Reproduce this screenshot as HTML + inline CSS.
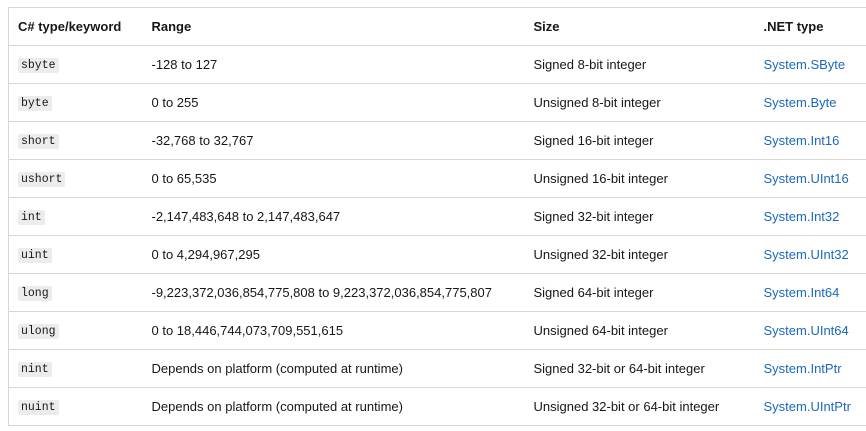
<!DOCTYPE html>
<html><head><style>
body{margin:0;background:#fff;font-family:"Liberation Sans",sans-serif;font-size:13px;color:#171717;}
table{position:absolute;left:8px;top:7px;width:858px;border-collapse:collapse;border-left:1px solid #d6d6d6;border-top:1px solid #d6d6d6;}
td,th{height:37px;padding:0 0 0 9px;border-bottom:1px solid #d6d6d6;text-align:left;white-space:nowrap;vertical-align:middle}
th{font-weight:bold;}
code{font-family:"Liberation Mono",monospace;font-size:11.5px;background:#ececec;padding:1px 3px;border-radius:2px;vertical-align:1px;}
a{color:#1c68bd;text-decoration:none}
</style></head><body>
<table>
<colgroup><col style="width:134px"><col style="width:382px"><col style="width:230px"><col></colgroup>
<tr><th>C# type/keyword</th><th>Range</th><th>Size</th><th>.NET type</th></tr>
<tr><td><code>sbyte</code></td><td>-128 to 127</td><td>Signed 8-bit integer</td><td><a>System.SByte</a></td></tr>
<tr><td><code>byte</code></td><td>0 to 255</td><td>Unsigned 8-bit integer</td><td><a>System.Byte</a></td></tr>
<tr><td><code>short</code></td><td>-32,768 to 32,767</td><td>Signed 16-bit integer</td><td><a>System.Int16</a></td></tr>
<tr><td><code>ushort</code></td><td>0 to 65,535</td><td>Unsigned 16-bit integer</td><td><a>System.UInt16</a></td></tr>
<tr><td><code>int</code></td><td>-2,147,483,648 to 2,147,483,647</td><td>Signed 32-bit integer</td><td><a>System.Int32</a></td></tr>
<tr><td><code>uint</code></td><td>0 to 4,294,967,295</td><td>Unsigned 32-bit integer</td><td><a>System.UInt32</a></td></tr>
<tr><td><code>long</code></td><td>-9,223,372,036,854,775,808 to 9,223,372,036,854,775,807</td><td>Signed 64-bit integer</td><td><a>System.Int64</a></td></tr>
<tr><td><code>ulong</code></td><td>0 to 18,446,744,073,709,551,615</td><td>Unsigned 64-bit integer</td><td><a>System.UInt64</a></td></tr>
<tr><td><code>nint</code></td><td>Depends on platform (computed at runtime)</td><td>Signed 32-bit or 64-bit integer</td><td><a>System.IntPtr</a></td></tr>
<tr><td><code>nuint</code></td><td>Depends on platform (computed at runtime)</td><td>Unsigned 32-bit or 64-bit integer</td><td><a>System.UIntPtr</a></td></tr>
</table>
</body></html>
